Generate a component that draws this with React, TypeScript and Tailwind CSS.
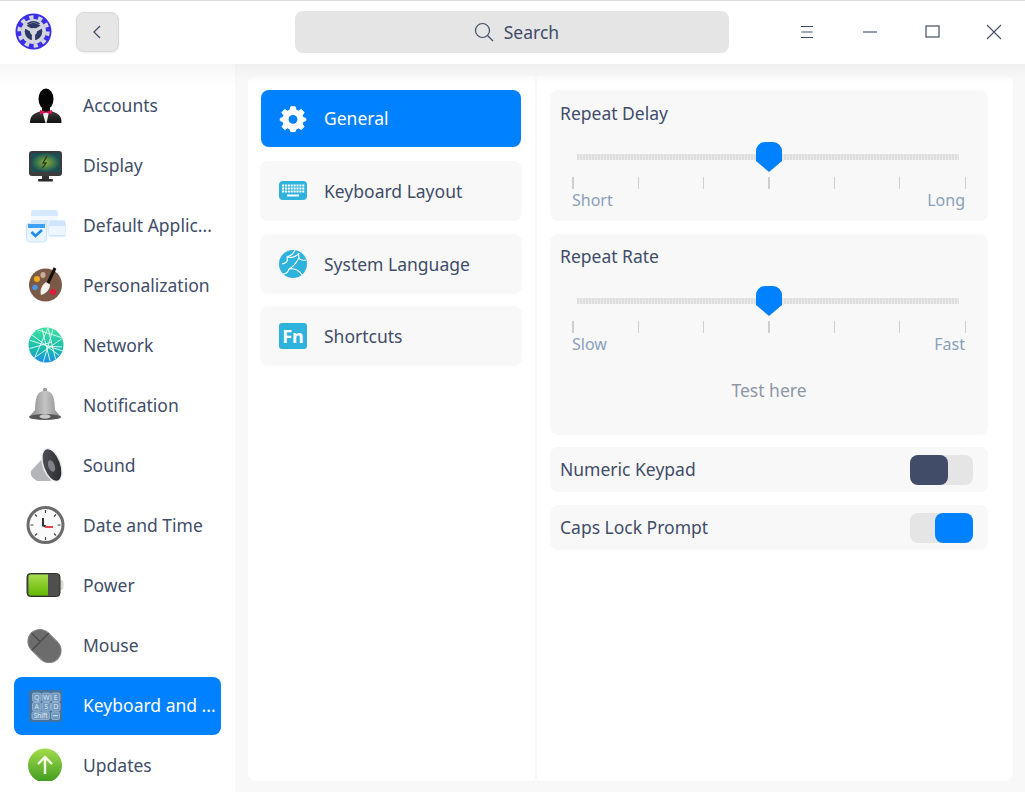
import React from 'react';

const IconProps = { width: 40, height: 40, viewBox: '0 0 40 40' };

function AppLogo() {
  return (
    <svg width="37" height="37" viewBox="0 0 37 37">
      <circle cx="18.5" cy="18.5" r="18" fill="#3a2fe6" />
      <circle cx="18.5" cy="18.5" r="14.2" fill="none" stroke="#d3d5df" strokeWidth="4" strokeDasharray="4.2 4.7" />
      <circle cx="18.5" cy="18.5" r="12.5" fill="#d3d5df" />
      <circle cx="18.5" cy="18.5" r="8.8" fill="#2d3a66" />
      <path d="M18.5 18.5 V28 M18.5 18.5 L10.3 13.8 M18.5 18.5 L26.7 13.8" stroke="#d3d5df" strokeWidth="3.2" />
      <circle cx="18.5" cy="18.5" r="3.4" fill="#d3d5df" />
      <path d="M12.5 11 Q18.5 6.5 24.5 11" stroke="#2d3a66" strokeWidth="1.6" fill="none" />
    </svg>
  );
}

function AccountsIcon() {
  return (
    <svg {...IconProps}>
      <defs>
        <linearGradient id="suit" x1="0" y1="0" x2="0" y2="1">
          <stop offset="0" stopColor="#3a3a3a" />
          <stop offset="1" stopColor="#111" />
        </linearGradient>
      </defs>
      <path d="M4 38 C4 31 7 28.5 14 26.5 L26 26.5 C33 28.5 35.5 31 35.5 38 Z" fill="url(#suit)" />
      <path d="M16.5 27 L23 27 L20.5 38 L19.5 38 Z" fill="#eee" />
      <ellipse cx="20" cy="14" rx="7.5" ry="10.5" fill="#050505" />
      <rect x="16" y="21" width="8" height="6" fill="#050505" />
      <path d="M14 25 L20 26.8 L26 25 L26 29.5 L20 27.8 L14 29.5 Z" fill="#d3125f" />
    </svg>
  );
}

function DisplayIcon() {
  return (
    <svg {...IconProps}>
      <defs>
        <radialGradient id="scr">
          <stop offset="0" stopColor="#8fae36" />
          <stop offset="0.6" stopColor="#3f7a4a" />
          <stop offset="1" stopColor="#1b4d55" />
        </radialGradient>
      </defs>
      <rect x="3" y="6" width="33" height="25" rx="3" fill="#3c3c3c" />
      <rect x="5" y="8" width="29" height="19" fill="url(#scr)" />
      <path d="M21 11 L17 18 L20 18 L16.5 23" stroke="#2c3a20" strokeWidth="1.3" fill="none" />
      <rect x="16" y="31" width="7" height="3" fill="#333" />
      <rect x="12" y="34" width="15" height="2.5" rx="1" fill="#2b2b2b" />
    </svg>
  );
}

function DefaultAppsIcon() {
  return (
    <svg {...IconProps}>
      <rect x="5" y="5" width="27" height="20" rx="3" fill="#d5e9fc" />
      <rect x="5" y="11" width="27" height="4" fill="#f4f9ff" />
      <rect x="22" y="15" width="18" height="17" rx="3" fill="#cfe5fb" stroke="#eef6ff" />
      <rect x="23" y="21" width="16" height="9" fill="#edf6ff" />
      <rect x="0.5" y="18" width="20" height="19" rx="3" fill="#e8f4ff" stroke="#cbe3fa" />
      <rect x="2" y="19" width="17" height="4" fill="#3ea1f5" />
      <path d="M5.5 27 L9.5 31 L16 25" stroke="#1b8cf0" strokeWidth="2.6" fill="none" />
    </svg>
  );
}

function PersonalizationIcon() {
  return (
    <svg {...IconProps}>
      <circle cx="19.5" cy="20" r="16.5" fill="#7a5a46" />
      <ellipse cx="17" cy="10" rx="2.6" ry="3" fill="#d0aa98" />
      <circle cx="11" cy="14" r="3" fill="#f3a81e" />
      <circle cx="9" cy="22.5" r="2.8" fill="#4c94e8" />
      <circle cx="27" cy="27" r="3" fill="#e3173f" />
      <path d="M15 30 C13.5 25 16 20 20 17 L24 19.5 C24 24 21 28 15 30 Z" fill="#f4efe8" />
      <path d="M22 18 L29 3" stroke="#111" strokeWidth="3" />
    </svg>
  );
}

function NetworkIcon() {
  return (
    <svg {...IconProps}>
      <defs>
        <linearGradient id="net" x1="0" y1="0" x2="0" y2="1">
          <stop offset="0" stopColor="#3fe3a0" />
          <stop offset="0.65" stopColor="#17b8ac" />
          <stop offset="1" stopColor="#1f8cf0" />
        </linearGradient>
        <clipPath id="netclip">
          <circle cx="20" cy="20" r="17" />
        </clipPath>
      </defs>
      <circle cx="20" cy="20" r="17.5" fill="url(#net)" />
      <path
        clipPath="url(#netclip)"
        d="M8 34 L22 3 L30 36 M3 15 L37 26 M12 5 L37 13 L8 33 M17 38 L27 4 M2 24 L26 17 M16 4 L24 36 M6 10 L34 31 M20 21 L36 22"
        stroke="#e6fbf5"
        strokeWidth="0.9"
        fill="none"
      />
    </svg>
  );
}

function NotificationIcon() {
  return (
    <svg {...IconProps}>
      <defs>
        <linearGradient id="bell" x1="0" y1="0" x2="1" y2="0">
          <stop offset="0" stopColor="#858585" />
          <stop offset="0.5" stopColor="#c4c4c4" />
          <stop offset="1" stopColor="#8a8a8a" />
        </linearGradient>
      </defs>
      <circle cx="19" cy="5" r="2.2" fill="#9a9a9a" />
      <path d="M9 25 C9.5 14 10 6 19 6 C28 6 28.5 14 29 25 L35 32 L3 32 Z" fill="url(#bell)" />
      <ellipse cx="19" cy="32" rx="16" ry="3" fill="#565656" />
      <ellipse cx="19" cy="31.5" rx="5.5" ry="2.2" fill="#c9c9c9" />
    </svg>
  );
}

function SoundIcon() {
  return (
    <svg {...IconProps}>
      <defs>
        <linearGradient id="cone" x1="0" y1="0" x2="1" y2="1">
          <stop offset="0" stopColor="#55565b" />
          <stop offset="1" stopColor="#25262a" />
        </linearGradient>
      </defs>
      <path d="M5 26 L16 14 L25 36 L11 36 C6 33 4 30 5 26 Z" fill="#b4b5b9" />
      <ellipse cx="26" cy="20" rx="9.5" ry="18" transform="rotate(-20 26 20)" fill="#ececee" />
      <ellipse cx="26" cy="20" rx="8" ry="16.5" transform="rotate(-20 26 20)" fill="url(#cone)" />
      <ellipse cx="25.5" cy="21" rx="3.2" ry="6" transform="rotate(-20 25.5 21)" fill="#808186" />
    </svg>
  );
}

function ClockIcon() {
  return (
    <svg {...IconProps}>
      <circle cx="19.5" cy="20" r="17.5" fill="#fafafa" stroke="#6b6b6b" strokeWidth="3" />
      <path d="M19.5 5 V8 M19.5 32 V35 M4.5 20 H7.5 M31.5 20 H34.5 M9 9.5 L11 11.5 M30 9.5 L28 11.5 M9 30.5 L11 28.5 M30 30.5 L28 28.5" stroke="#444" strokeWidth="1.2" />
      <path d="M17 13 V20.5 L20 21.5" stroke="#333" strokeWidth="2" fill="none" />
      <path d="M19 22 H27" stroke="#e8444a" strokeWidth="2" />
    </svg>
  );
}

function PowerIcon() {
  return (
    <svg {...IconProps}>
      <defs>
        <linearGradient id="batt" x1="0" y1="0" x2="0" y2="1">
          <stop offset="0" stopColor="#a7dc4e" />
          <stop offset="1" stopColor="#62b800" />
        </linearGradient>
      </defs>
      <rect x="33" y="15" width="4.5" height="10" rx="2" fill="#d9d9d6" />
      <rect x="1" y="8.5" width="33" height="23" rx="3.5" fill="#4f4f4f" stroke="#2b3320" />
      <path d="M2.5 12 A2.5 2.5 0 0 1 5 9.5 H22 V30.5 H5 A2.5 2.5 0 0 1 2.5 28 Z" fill="url(#batt)" />
    </svg>
  );
}

function MouseIcon() {
  return (
    <svg {...IconProps}>
      <g transform="rotate(-45 18.5 21)">
        <rect x="6.5" y="2.5" width="24" height="37" rx="12" fill="#6c6c6c" stroke="#858585" />
        <path d="M6.5 15 H30.5 M18.5 2.5 V15" stroke="#484848" strokeWidth="1.2" />
      </g>
    </svg>
  );
}

function KeyboardIcon() {
  const keys = ['Q', 'W', 'E', 'A', 'S', 'D'];
  return (
    <svg {...IconProps}>
      <rect x="3" y="5" width="33" height="32" rx="3" fill="#45739f" />
      {keys.map((k, i) => (
        <g key={k}>
          <rect x={6.5 + (i % 3) * 9.5} y={8 + Math.floor(i / 3) * 9.5} width="8.5" height="8.5" rx="1.5" fill="#6f98bd" stroke="#a9c2d8" strokeWidth="0.7" />
          <text x={10.7 + (i % 3) * 9.5} y={14.8 + Math.floor(i / 3) * 9.5} fontSize="7" textAnchor="middle" fill="#dbe7f1">
            {k}
          </text>
        </g>
      ))}
      <rect x="6" y="27" width="17.5" height="7.5" rx="1.5" fill="#6f98bd" stroke="#a9c2d8" strokeWidth="0.7" />
      <text x="14.7" y="33.3" fontSize="6.5" textAnchor="middle" fill="#e6eef5">
        Shift
      </text>
      <rect x="25.5" y="27" width="8" height="7.5" rx="1.5" fill="#6f98bd" stroke="#a9c2d8" strokeWidth="0.7" />
      <path d="M27 30.7 H32" stroke="#dbe7f1" />
    </svg>
  );
}

function UpdatesIcon() {
  return (
    <svg {...IconProps}>
      <defs>
        <linearGradient id="upd" x1="0" y1="0" x2="0" y2="1">
          <stop offset="0" stopColor="#a3dc4c" />
          <stop offset="1" stopColor="#3f9a1f" />
        </linearGradient>
      </defs>
      <circle cx="19" cy="20.5" r="17" fill="url(#upd)" />
      <path d="M19 29 V12.5 M12 19 L19 12 L26 19" stroke="#f4fbe9" strokeWidth="2.4" fill="none" />
    </svg>
  );
}

function GearIcon() {
  return (
    <svg width="28" height="28" viewBox="0 0 28 28">
      <path
        d="M11.8 1.8 H16.2 L17 5.1 L19.4 6.1 L22.3 4.4 L25.1 7.6 L23.2 10.3 L24 12.6 L26.8 13.4 V15.6 L24 16.6 L23.2 19 L25 21.6 L22.3 24.6 L19.4 22.9 L17 24 L16.2 26.6 H11.8 L11 24 L8.6 22.9 L5.7 24.6 L3 21.6 L4.8 19 L4 16.6 L1.2 15.6 V13.4 L4 12.6 L4.8 10.3 L2.9 7.6 L5.7 4.4 L8.6 6.1 L11 5.1 Z"
        fill="#fff"
        stroke="#fff"
        strokeLinejoin="round"
      />
      <circle cx="14" cy="14.4" r="4.4" fill="#0081ff" />
    </svg>
  );
}

function KeyLayoutIcon() {
  const cols = [0, 1, 2, 3, 4, 5, 6, 7];
  return (
    <svg width="28" height="20" viewBox="0 0 28 20">
      <rect width="28" height="19" rx="4" fill="#2fb3dc" />
      {[3.5, 6.5, 9.5].map((y) =>
        cols.map((c) => <rect key={`${y}-${c}`} x={3 + c * 2.9} y={y} width="2" height="2" fill="#fff" />)
      )}
      <rect x="8" y="13.5" width="12" height="2" fill="#fff" />
    </svg>
  );
}

function GlobeIcon() {
  return (
    <svg width="28" height="28" viewBox="0 0 28 28">
      <circle cx="14" cy="14" r="14" fill="#2fb3dc" />
      <path d="M16 0 C14 4 13 5 8 7 C9 11 8 13 3 14 M8 7 C12 8 17 7 20 3 M20 3 C19 8 20 11 27 10 M20 8 C17 13 15 17 10 19 C9 22 7 24 4 24 M10 19 C15 18 20 20 23 25" stroke="#fff" strokeWidth="1.1" fill="none" />
    </svg>
  );
}

function FnIcon() {
  return (
    <div className="flex h-[26px] w-[28px] items-center justify-center rounded-[3px] bg-[#2fb3dc] text-[18px] font-bold leading-none text-white">
      Fn
    </div>
  );
}

const sidebarItems: { label: string; icon: React.ReactNode; active?: boolean }[] = [
  { label: 'Accounts', icon: <AccountsIcon /> },
  { label: 'Display', icon: <DisplayIcon /> },
  { label: 'Default Applic...', icon: <DefaultAppsIcon /> },
  { label: 'Personalization', icon: <PersonalizationIcon /> },
  { label: 'Network', icon: <NetworkIcon /> },
  { label: 'Notification', icon: <NotificationIcon /> },
  { label: 'Sound', icon: <SoundIcon /> },
  { label: 'Date and Time', icon: <ClockIcon /> },
  { label: 'Power', icon: <PowerIcon /> },
  { label: 'Mouse', icon: <MouseIcon /> },
  { label: 'Keyboard and ...', icon: <KeyboardIcon />, active: true },
  { label: 'Updates', icon: <UpdatesIcon /> },
];

function Slider({ low, high }: { low: string; high: string }) {
  return (
    <div className="pl-[22px] pr-[23px]">
      <div className="relative ml-[5px] mr-[6px] h-[30px]">
        <div className="absolute left-0 right-0 top-[12px] h-[6px] bg-[repeating-linear-gradient(90deg,#dedede_0,#dedede_2px,#ececec_2px,#ececec_3px)]" />
        <svg className="absolute left-[179px] top-0" width="26" height="31" viewBox="0 0 26 31">
          <path d="M0 9 A9 9 0 0 1 9 0 H17 A9 9 0 0 1 26 9 V19 L13 30 L0 19 Z" fill="#0081ff" />
        </svg>
      </div>
      <div className="mr-[-1px] mt-[5px] flex h-[12px] justify-between">
        {[0, 1, 2, 3, 4, 5, 6].map((t) => (
          <div key={t} className={`h-[12px] bg-[#cfcfcf] ${t % 3 === 0 ? 'w-[1.5px]' : 'w-px'}`} />
        ))}
      </div>
      <div className="flex justify-between text-[16px] leading-[22px] text-[#8aa0b8]">
        <span>{low}</span>
        <span>{high}</span>
      </div>
    </div>
  );
}

export default function App() {
  return (
    <div className="flex h-[792px] w-[1025px] flex-col overflow-hidden bg-[#f8f8f8] text-[17.5px] text-[#414d68] [font-family:'Noto_Sans',sans-serif]">
      {/* Title bar */}
      <header className="flex h-[64px] shrink-0 items-center border-t border-[#dcdcdc] bg-white pb-[2px]">
        <div className="ml-[15px] w-[37px]">
          <AppLogo />
        </div>
        <button className="ml-[24px] flex h-[40px] w-[43px] items-center justify-center rounded-[8px] border border-[#d8d8d8] bg-[#e6e6e6] shadow-[0_1px_2px_rgba(0,0,0,0.08)]">
          <svg width="10" height="16" viewBox="0 0 10 16">
            <path d="M8 2 L2 8 L8 14" stroke="#414d68" strokeWidth="1.3" fill="none" />
          </svg>
        </button>
        <div className="ml-[176px] flex h-[42px] w-[435px] items-center justify-center gap-[10px] rounded-[8px] bg-[#e5e5e5] pl-[9px]">
          <svg width="20" height="20" viewBox="0 0 20 20">
            <circle cx="8.5" cy="8.5" r="7" stroke="#414d68" strokeWidth="1.2" fill="none" />
            <path d="M13.5 13.5 L19 19" stroke="#414d68" strokeWidth="1.2" />
          </svg>
          <span className="mt-[1px]">Search</span>
        </div>
        <div className="ml-[47px] flex items-center">
          <button className="flex h-[40px] w-[62px] items-center justify-center">
            <svg width="14" height="14" viewBox="0 0 14 14">
              <path d="M1 1.5 H13 M1.5 7 H12.5 M1 12.5 H13" stroke="#414d68" strokeWidth="1" />
            </svg>
          </button>
          <button className="flex h-[40px] w-[63px] items-center justify-center">
            <svg width="16" height="4" viewBox="0 0 16 4">
              <path d="M1 2 H15" stroke="#414d68" strokeWidth="1.1" />
            </svg>
          </button>
          <button className="flex h-[40px] w-[62px] items-center justify-center">
            <svg width="15" height="13" viewBox="0 0 15 13">
              <rect x="1" y="1" width="13" height="11" fill="none" stroke="#414d68" strokeWidth="1.2" />
            </svg>
          </button>
          <button className="flex h-[40px] w-[62px] items-center justify-center">
            <svg width="16" height="16" viewBox="0 0 16 16">
              <path d="M1 1 L15 15 M15 1 L1 15" stroke="#414d68" strokeWidth="1.1" />
            </svg>
          </button>
        </div>
      </header>

      <div className="flex min-h-0 flex-1 bg-gradient-to-b from-[#f0f0f0] from-0% to-[#f8f8f8] to-[2%]">
        {/* Sidebar */}
        <aside className="h-full w-[235px] shrink-0 bg-gradient-to-b from-[#f6f6f6] from-0% to-white to-[3%] px-[14px] pb-[11px] pt-[11px]">
          <div className="h-full overflow-hidden">
            {sidebarItems.map((item) => (
              <div key={item.label} className="flex h-[60px] items-end">
                <div className={`flex h-[58px] w-full items-center rounded-[8px] pb-[2px] pl-[12px] ${item.active ? 'bg-[#0081ff] text-white' : ''}`}>
                  <div className="w-[40px] shrink-0">{item.icon}</div>
                  <span className="ml-[17px] min-w-0 flex-1 whitespace-nowrap">{item.label}</span>
                </div>
              </div>
            ))}
          </div>
        </aside>

        {/* Main panel */}
        <main className="mb-[11px] ml-[13px] mt-[12px] flex w-[765px] overflow-hidden rounded-[8px] bg-gradient-to-b from-[#fafafa] from-0% to-white to-[1%]">
          <nav className="flex w-[289px] shrink-0 flex-col border-r-2 border-[#f8f8f8] pl-[12px] pr-[13px] pt-[14px]">
            <div className="mx-[1px] flex h-[57px] items-center gap-[17px] rounded-[8px] bg-[#0081ff] pl-[18px] text-white">
              <GearIcon />
              <span>General</span>
            </div>
            <div className="mt-[14px] flex h-[60px] items-center gap-[17px] rounded-[8px] bg-[#f8f8f8] pl-[19px]">
              <KeyLayoutIcon />
              <span>Keyboard Layout</span>
            </div>
            <div className="mt-[13px] flex h-[60px] items-center gap-[17px] rounded-[8px] bg-[#f8f8f8] pl-[19px]">
              <GlobeIcon />
              <span>System Language</span>
            </div>
            <div className="mt-[12px] flex h-[60px] items-center gap-[17px] rounded-[8px] bg-[#f8f8f8] pl-[19px]">
              <FnIcon />
              <span>Shortcuts</span>
            </div>
          </nav>

          <section className="flex flex-1 flex-col pl-[13px] pr-[25px] pt-[14px]">
            <div className="h-[131px] rounded-[8px] bg-[#f8f8f8]">
              <div className="px-[10px] pt-[10px] leading-[26px]">Repeat Delay</div>
              <div className="mt-[16px]">
                <Slider low="Short" high="Long" />
              </div>
            </div>
            <div className="mt-[13px] h-[201px] rounded-[8px] bg-[#f8f8f8]">
              <div className="px-[10px] pt-[9px] leading-[26px]">Repeat Rate</div>
              <div className="mt-[17px]">
                <Slider low="Slow" high="Fast" />
              </div>
              <div className="mt-[22px] text-center text-[#8e97a6]">Test here</div>
            </div>
            <div className="mt-[12px] flex h-[45px] items-center justify-between rounded-[8px] bg-[#f8f8f8] pl-[10px] pr-[15px]">
              <span>Numeric Keypad</span>
              <div className="h-[30px] w-[63px] rounded-[8px] bg-[#e5e5e5]">
                <div className="h-[30px] w-[38px] rounded-[8px] bg-[#414d68]" />
              </div>
            </div>
            <div className="mt-[13px] flex h-[45px] items-center justify-between rounded-[8px] bg-[#f8f8f8] pl-[10px] pr-[15px]">
              <span>Caps Lock Prompt</span>
              <div className="flex h-[30px] w-[63px] justify-end rounded-[8px] bg-[#e5e5e5]">
                <div className="h-[30px] w-[38px] rounded-[8px] bg-[#0081ff]" />
              </div>
            </div>
          </section>
        </main>
      </div>
    </div>
  );
}
